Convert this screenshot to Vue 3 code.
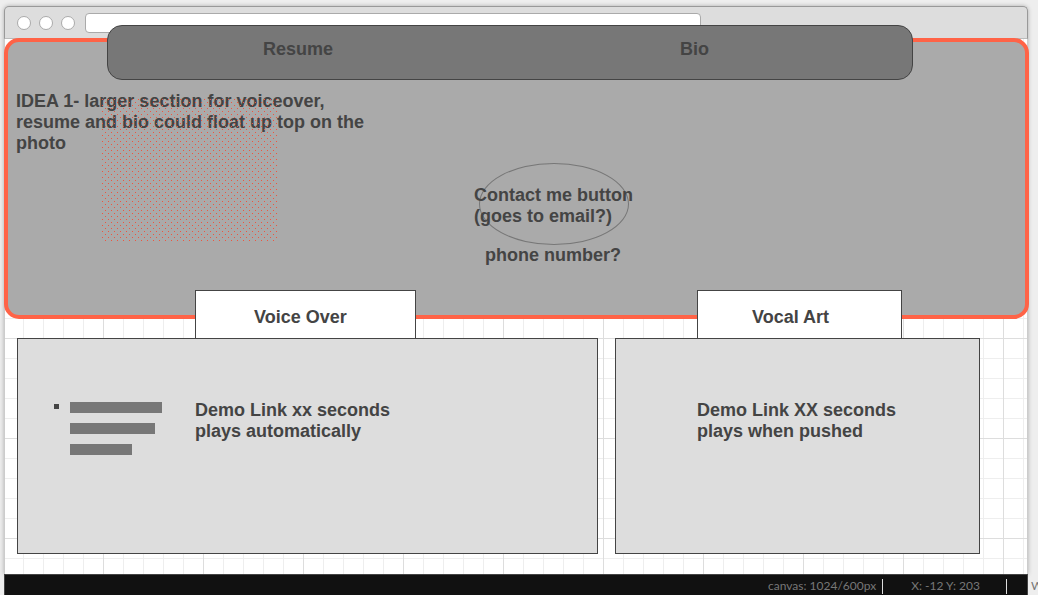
<script setup>
const nav = [
  { label: 'Resume', href: '#resume' },
  { label: 'Bio', href: '#bio' },
]
</script>

<template>
  <div class="workspace">
    <main class="window">
      <header class="chrome">
        <span class="dot"></span>
        <span class="dot"></span>
        <span class="dot"></span>
        <input class="address" type="text" aria-label="Address" />
      </header>

      <section class="hero">
        <nav class="nav">
          <a v-for="item in nav" :key="item.label" :href="item.href">{{ item.label }}</a>
        </nav>
        <p class="note">IDEA 1- larger section for voiceover, resume and bio could float up top on the photo</p>
        <svg class="scribble" aria-hidden="true">
          <defs>
            <pattern id="dots" width="6" height="6" patternUnits="userSpaceOnUse">
              <rect x="0" y="0" width="1" height="1" />
              <rect x="3" y="3" width="1" height="1" />
            </pattern>
          </defs>
          <rect width="100%" height="100%" fill="url(#dots)" />
        </svg>
        <div class="contact">
          <button class="contact-button" type="button"><span>Contact me button (goes to email?)</span></button>
          <p class="phone">phone number?</p>
        </div>
      </section>

      <div class="panels">
        <section class="voice">
          <h2 class="tab">Voice Over</h2>
          <div class="panel">
            <ul class="lines" aria-label="Demo list">
              <li class="bar long"></li>
              <li class="bar medium"></li>
              <li class="bar short"></li>
            </ul>
            <p>Demo Link xx seconds<br />plays automatically</p>
          </div>
        </section>
        <section class="vocal">
          <h2 class="tab">Vocal Art</h2>
          <div class="panel">
            <p>Demo Link XX seconds<br />plays when pushed</p>
          </div>
        </section>
      </div>
    </main>

    <footer class="status">
      <div class="readout">
        <span class="cell size">canvas: 1024/600px</span>
        <span class="cell position">X: -12 Y: 203</span>
      </div>
      <span class="more">W</span>
    </footer>
  </div>
</template>

<style>
body {
  background: #eee;
}
</style>

<style scoped>
.workspace {
  box-sizing: border-box;
  height: 100vh;
  padding: 6px 10px 0 4px;
  overflow: hidden;
  background: #eee;
  color: #444;
  font: bold 18px/21px "Liberation Sans", Arial, sans-serif;
}
.workspace * {
  box-sizing: border-box;
}
p,
h2,
ul {
  margin: 0;
  padding: 0;
  font-size: 18px;
  list-style: none;
}
.window {
  padding-bottom: 20px;
  border-radius: 5px 5px 0 0;
  background-color: #fff;
  background-image:
    linear-gradient(90deg, #ddd 1px, transparent 1px),
    linear-gradient(#ddd 1px, transparent 1px),
    linear-gradient(90deg, #eee 1px, transparent 1px),
    linear-gradient(#eee 1px, transparent 1px);
  background-size: 100px 100px, 100px 100px, 20px 20px, 20px 20px;
  background-position: 99px 32px, 99px 32px, 19px 12px, 19px 12px;
  box-shadow: 0 0 4px #aaa, inset 1px 0 #ccc, inset -1px 0 #ccc;
}
.chrome {
  display: flex;
  align-items: center;
  gap: 8px;
  height: 33px;
  padding-left: 12px;
  border: 1px solid #999;
  border-bottom-color: #bbb;
  border-radius: 5px 5px 0 0;
  background: #ddd;
}
.dot {
  width: 14px;
  height: 14px;
  border: 1px solid #aaa;
  border-radius: 50%;
  background: #fff;
}
.address {
  width: 61%;
  height: 20px;
  margin-left: 2px;
  border: 1px solid #aaa;
  border-radius: 4px;
  background: #fff;
}
.hero {
  position: relative;
  display: flex;
  justify-content: space-between;
  margin: -1px -1px 0 0;
  padding: 49px 388px 49px 8px;
  border: 4px solid #ff6347;
  border-radius: 15px;
  background: #aaa;
}
.nav {
  position: absolute;
  top: -17px;
  left: 99px;
  right: 112px;
  display: grid;
  grid-template-columns: 417px auto;
  height: 55px;
  padding: 13px 0 0 155px;
  border: 1px solid #444;
  border-radius: 15px;
  background: #777;
}
.nav a {
  color: inherit;
  text-decoration: none;
}
.note {
  width: 370px;
}
.scribble {
  position: absolute;
  top: 57px;
  left: 94px;
  width: 175px;
  height: 142px;
  fill: #ee5540;
}
.contact {
  width: 162px;
  padding-top: 72px;
}
.contact-button {
  display: block;
  width: 150px;
  height: 82px;
  margin-left: 4px;
  padding: 4px 0 0;
  border: 1px solid #777;
  border-radius: 50%;
  background: transparent;
  color: inherit;
  font: inherit;
  text-align: left;
}
.contact-button span {
  display: block;
  width: 170px;
  margin-left: -6px;
}
.phone {
  margin-left: 10px;
}
.panels {
  position: relative;
  display: grid;
  grid-template-columns: 581fr 365fr;
  gap: 17px;
  margin: -29px 48px 0 13px;
}
.tab {
  width: 221px;
  height: 48px;
  margin-left: 178px;
  padding: 16px 0 0 58px;
  border: 1px solid #444;
  border-bottom: 0;
  background: #fff;
}
.vocal .tab {
  width: 205px;
  margin-left: 82px;
  padding-left: 54px;
}
.panel {
  display: flex;
  height: 216px;
  padding: 61px 0 0 36px;
  border: 1px solid #444;
  background: #ddd;
}
.vocal .panel {
  padding-left: 81px;
}
.lines {
  display: grid;
  align-content: start;
  gap: 10px;
  width: 141px;
  padding: 2px 0 0 16px;
}
.bar {
  position: relative;
  height: 11px;
  background: #777;
}
.long {
  width: 92px;
}
.medium {
  width: 85px;
}
.short {
  width: 62px;
}
.long::before {
  position: absolute;
  top: 2px;
  left: -16px;
  width: 5px;
  height: 5px;
  background: #444;
  content: "";
}
.status {
  position: relative;
  color: #777;
  font: 12px/14px Lato, sans-serif;
}
.readout {
  display: flex;
  justify-content: flex-end;
  height: 24px;
  padding: 4px 20px 0 0;
  border: 1px solid #444;
  border-bottom: 0;
  background: #111;
}
.cell {
  height: 15px;
  border-right: 1px solid #ddd;
}
.size {
  padding-right: 6px;
}
.position {
  padding: 0 26px 0 28px;
}
.more {
  position: absolute;
  top: 5px;
  left: 100%;
  margin-left: 3px;
}
</style>
